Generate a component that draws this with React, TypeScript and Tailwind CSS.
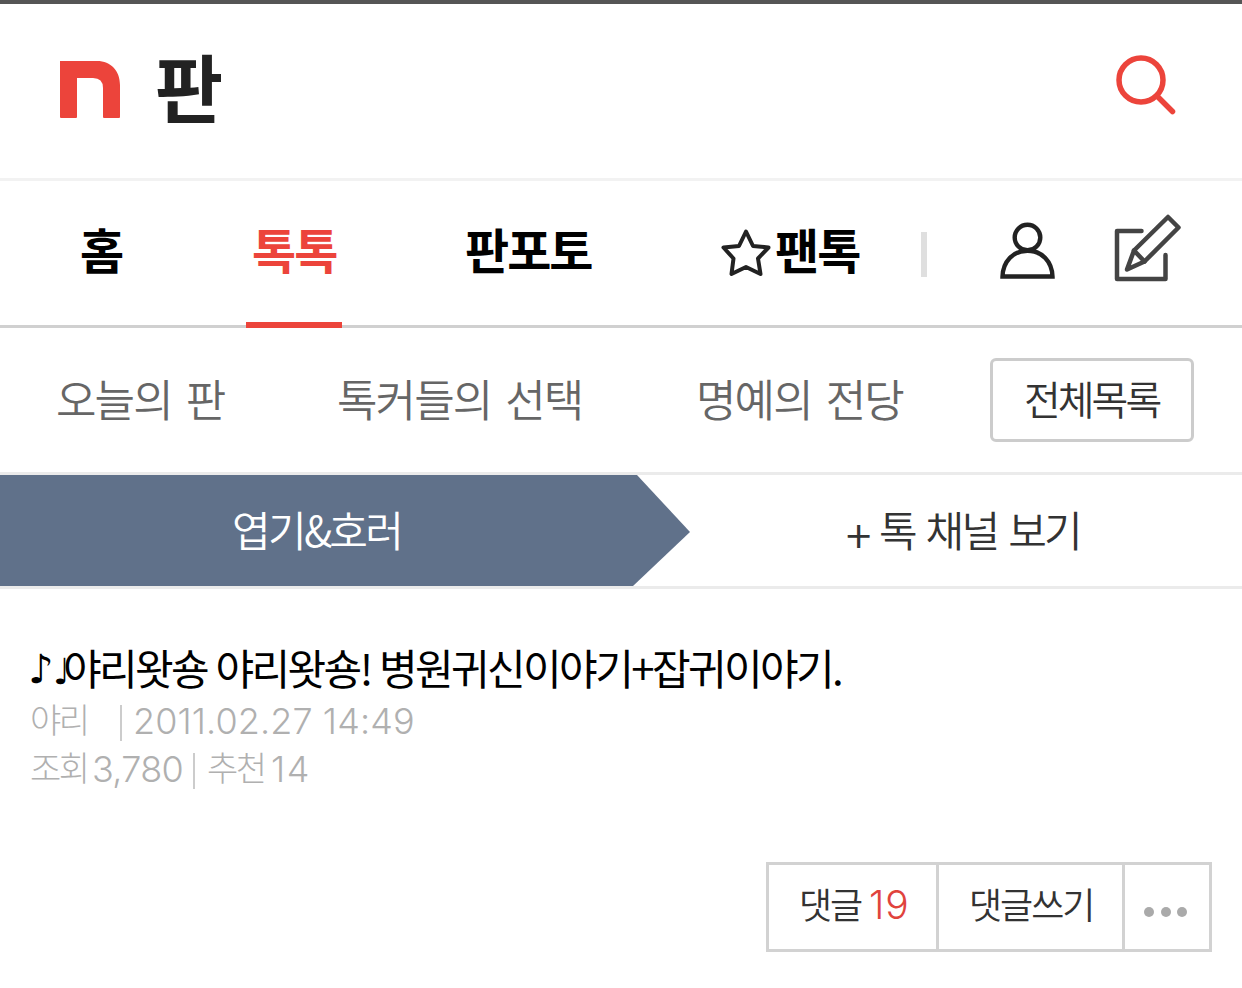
const mainTabs = [
  { label: '홈', box: 'ml-[80px] w-[44px]', active: false },
  { label: '톡톡', box: 'ml-[122px] w-[96px]', active: true },
  { label: '판포토', box: 'ml-[123px] w-[130px]', active: false },
];

const subTabs = [
  { label: '오늘의 판', box: 'ml-[56px] w-[170px]' },
  { label: '톡커들의 선택', box: 'ml-[111px] w-[250px]' },
  { label: '명예의 전당', box: 'ml-[109px] w-[210px]' },
];

function Logo() {
  return (
    <svg className="ml-[60px] mt-[57px] h-[57px] w-[60px]" viewBox="0 0 60 57" fill="#ec443b">
      <path d="M0 0H37C51 0 60 10 60 24V56Q60 57 59 57H44Q43 57 43 56V27Q43 17 33 17H17V56Q17 57 16 57H1Q0 57 0 56Z" />
    </svg>
  );
}

function SearchIcon() {
  return (
    <svg className="h-[62px] w-[62px]" viewBox="0 0 62 62" fill="none" stroke="#ec443b" strokeLinecap="round">
      <circle cx="26" cy="26" r="22" strokeWidth="5.5" />
      <path d="M42 42L57.500 57.500" strokeWidth="5.5" />
    </svg>
  );
}

function StarIcon() {
  return (
    <svg className="h-[50px] w-[50px]" viewBox="0 0 50 50" fill="none" stroke="#222" strokeWidth="4" strokeLinejoin="round">
      <path d="M25 4.500L32 19L47.500 20.500L37 31.500L39.500 47L25 40L10.500 47L12.500 31.500L2.500 20.500L18 19Z" />
    </svg>
  );
}

function UserIcon() {
  return (
    <svg className="h-[58px] w-[56px]" viewBox="0 0 56 58" fill="none" stroke="#222" strokeWidth="4.400">
      <circle cx="27.500" cy="15.500" r="12.800" />
      <path d="M2.500 54.500C3 39.500 13 28.800 27.500 28.800S52 39.500 52.500 54.500Z" />
    </svg>
  );
}

function WriteIcon() {
  return (
    <svg className="h-[68px] w-[68px]" viewBox="0 0 68 68" fill="none" stroke="#444" strokeWidth="4.500" strokeLinejoin="round" strokeLinecap="round">
      <path d="M27.500 17H3V65H51.500V41" />
      <path d="M54 3L64.500 13.500L30.500 47.500L13 55.500L20 36.500Z" />
      <path d="M20 36.500L30.500 47.500" />
    </svg>
  );
}

export default function App() {
  return (
    <div className="h-[988px] w-[1242px] overflow-hidden whitespace-nowrap bg-white font-['Noto_Sans_CJK_KR',sans-serif]">
      <header className="flex h-[181px] border-b-[3px] border-t-4 border-b-[#f2f2f2] border-t-[#555]">
        <Logo />
        <h1 className="ml-[35px] mt-[33px] text-[74px] font-bold leading-[96px] text-[#222]">판</h1>
        <button className="ml-auto mr-[65px] mt-[50px] h-[62px]">
          <SearchIcon />
        </button>
      </header>

      <nav className="flex h-[147px] border-b-[3px] border-[#d0d0d0] text-[48px] font-bold leading-[135px] tracking-[-2px]">
        {mainTabs.map((tab) => (
          <a
            key={tab.label}
            className={`${tab.box} h-[147px] ${tab.active ? 'border-b-[6px] border-[#ec443b] pl-[6px] text-[#ec443b]' : 'text-black'}`}
          >
            {tab.label}
          </a>
        ))}
        <a className="ml-[126px] flex w-[141px] text-black">
          <span className="mt-[46px] w-[54px]">
            <StarIcon />
          </span>
          팬톡
        </a>
        <span className="ml-[59px] mt-[51px] h-[45px] w-[6px] bg-[#dfdfdf]" />
        <span className="ml-[73px] mt-[41px]">
          <UserIcon />
        </span>
        <span className="ml-[58px] mt-[33px]">
          <WriteIcon />
        </span>
      </nav>

      <nav className="flex h-[147px] border-b-[3px] border-[#ebebeb] text-[44px] font-[350] leading-[141px] tracking-[-1.900px] text-[#666] [word-spacing:6px]">
        {subTabs.map((tab) => (
          <a key={tab.label} className={tab.box}>
            {tab.label}
          </a>
        ))}
        <a className="ml-[84px] mt-[30px] h-[84px] w-[204px] rounded-[6px] border-[3px] border-[#ccc] pl-[31px] text-[40px] leading-[75px] tracking-[-3px] text-[#333]">
          전체목록
        </a>
      </nav>

      <div className="flex h-[114px] border-b-[3px] border-[#ebebeb] text-[42px] font-[350] leading-[108px] tracking-[-2.700px]">
        <div className="h-[111px] w-[690px] bg-[#60718a] pl-[232px] text-white [clip-path:polygon(0_0,637px_0,690px_57px,633px_111px,0_111px)]">
          엽기&amp;호러
        </div>
        <div className="flex pl-[156px] text-[#333] [word-spacing:4px]">
          <span className="w-[33px] pt-[4px] text-[46px]">+</span>
          톡 채널 보기
        </div>
      </div>

      <article className="px-[30px] pt-[54px]">
        <h2 className="flex h-[54px] text-[42px] leading-[47px] tracking-[-2.600px] text-black [word-spacing:1.500px]">
          <span className="-ml-[2px] w-[25px] pt-[3px] font-['DejaVu_Sans'] text-[40px]">♪</span>
          <span className="w-[10px] pt-[5px] font-['DejaVu_Sans'] text-[36px] tracking-[-6px]">♩</span>
          야리왓숑 야리왓숑! 병원귀신이야기+잡귀이야기.
        </h2>
        <div className="flex h-[48px] items-center text-[34px] font-light leading-[48px] tracking-[-2.500px] text-[#b0b0b0]">
          <span className="-mt-[4px] w-[90px]">야리</span>
          <span className="mt-[3px] h-[36px] w-[2px] bg-[#ccc]" />
          <span className="ml-[11px] font-['Inter'] text-[36px] tracking-[0.100px]">2011.02.27 14:49</span>
        </div>
        <div className="flex h-[48px] items-center text-[34px] font-light leading-[48px] tracking-[-2.500px] text-[#b0b0b0]">
          <span className="-mt-[4px] w-[62px]">조회</span>
          <span className="w-[101px] font-['Inter'] text-[36px] tracking-[-0.700px]">3,780</span>
          <span className="mt-[3px] h-[36px] w-[2px] bg-[#ccc]" />
          <span className="-mt-[4px] ml-[12px] w-[64px]">추천</span>
          <span className="font-['Inter'] text-[36px] tracking-[1.500px]">14</span>
        </div>
      </article>

      <div className="ml-[766px] mt-[69px] flex h-[90px] w-[446px] divide-x-[3px] divide-[#d2d2d2] border-[3px] border-[#d2d2d2] text-left text-[36px] font-[350] tracking-[-2px] text-[#333]">
        <a className="flex w-[170px] pl-[30px] leading-[76px]">
          <span className="w-[70px]">댓글</span>
          <span className="font-['Inter'] text-[39px] font-light leading-[80px] tracking-[1px] text-[#e0433d]">19</span>
        </a>
        <a className="w-[186px] pl-[30px] leading-[76px]">댓글쓰기</a>
        <a className="flex w-[84px] items-center gap-[6.500px] pl-[19px] pt-[9px]">
          <span className="size-[10px] rounded-full bg-[#aaa]" />
          <span className="size-[10px] rounded-full bg-[#aaa]" />
          <span className="size-[10px] rounded-full bg-[#aaa]" />
        </a>
      </div>
    </div>
  );
}
